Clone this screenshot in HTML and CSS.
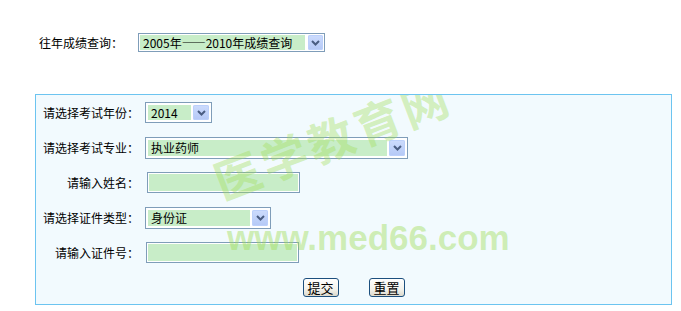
FILE: index.html
```html
<!DOCTYPE html>
<html lang="zh-CN">
<head>
    <meta charset="UTF-8">
    <title>成绩查询</title>
    <link rel="stylesheet" href="styles.css">
</head>
<body>
    <div class="history">
        <span class="history-label">往年成绩查询：</span>
        <span class="select select-history">
            <select>
                <option>2005年——2010年成绩查询</option>
            </select>
            <span class="arrow"><svg width="9" height="6" viewBox="0 0 9 6"><polyline points="1,1 4.5,4.5 8,1" fill="none" stroke="#4a5d82" stroke-width="2"/></svg></span>
        </span>
    </div>

    <form class="query">
        <label class="field-label">请选择考试年份：</label>
        <span class="select select-year">
            <select>
                <option>2014</option>
            </select>
            <span class="arrow"><svg width="9" height="6" viewBox="0 0 9 6"><polyline points="1,1 4.5,4.5 8,1" fill="none" stroke="#4a5d82" stroke-width="2"/></svg></span>
        </span>

        <label class="field-label">请选择考试专业：</label>
        <span class="select select-major">
            <select>
                <option>执业药师</option>
            </select>
            <span class="arrow"><svg width="9" height="6" viewBox="0 0 9 6"><polyline points="1,1 4.5,4.5 8,1" fill="none" stroke="#4a5d82" stroke-width="2"/></svg></span>
        </span>

        <label class="field-label">请输入姓名：</label>
        <input class="text-input input-name" type="text">

        <label class="field-label">请选择证件类型：</label>
        <span class="select select-idtype">
            <select>
                <option>身份证</option>
            </select>
            <span class="arrow"><svg width="9" height="6" viewBox="0 0 9 6"><polyline points="1,1 4.5,4.5 8,1" fill="none" stroke="#4a5d82" stroke-width="2"/></svg></span>
        </span>

        <label class="field-label">请输入证件号：</label>
        <input class="text-input input-id" type="text">

        <div class="actions">
            <button type="button" class="btn">提交</button>
            <button type="reset" class="btn">重置</button>
        </div>

        <!-- site watermark, laid over the form -->
        <div class="watermark">
            <span class="wm-cn">医学教育网</span>
            <span class="wm-url">www.med66.com</span>
        </div>
    </form>
</body>
</html>
```

FILE: styles.css
```css
body {
    margin: 0;
    background: #fff;
    font-family: "Noto Sans CJK SC", "DejaVu Sans", sans-serif;
    font-size: 12px;
    color: #000;
}

.history {
    display: flex;
    align-items: center;
    height: 19px;
    margin: 33px 0 0 39px;
}

.history-label {
    width: 99px;
    line-height: 19px;
}

/* IE/XP style dropdown */
.select {
    display: inline-flex;
    box-sizing: border-box;
    height: 21px;
    padding: 2px;
    gap: 2px;
    border: 1px solid #7f9db9;
    background: #fff;
}

.select select {
    flex: 1;
    min-width: 0;
    height: 100%;
    margin: 0;
    padding: 0 3px;
    border: 0;
    border-radius: 0;
    background: #c8edc8;
    font: inherit;
    line-height: 15px;
    color: #000;
    -webkit-appearance: none;
    appearance: none;
    outline: none;
}

.select .arrow {
    display: flex;
    align-items: center;
    justify-content: center;
    width: 16px;
    border-radius: 2px;
    background: linear-gradient(#cddcfd, #b4c8f6);
    box-shadow: inset 0 0 0 1px #bcd0fb;
}

.select-history {
    width: 187px;
    height: 19px;
    padding: 1px;
}

.select-history .arrow {
    width: 15px;
    margin-left: 1px;
}

.select-year {
    width: 67px;
}

.select-major {
    width: 263px;
    height: 22px;
}

.select-idtype {
    width: 126px;
    height: 22px;
}

.query {
    position: relative;
    display: grid;
    grid-template-columns: 103px 1fr;
    grid-auto-rows: 35px;
    column-gap: 6px;
    align-items: center;
    box-sizing: border-box;
    width: 637px;
    height: 211px;
    margin: 42px 0 0 35px;
    border: 1px solid #6cc4f0;
    background: #f2fafe;
}

.field-label {
    text-align: right;
    line-height: 16px;
}

.query .select,
.query .text-input {
    justify-self: start;
}

.text-input {
    box-sizing: border-box;
    width: 153px;
    height: 21px;
    margin: 0 0 0 1px;
    padding: 0 3px;
    border: 1px solid #7f9db9;
    background: #c8edc8;
    box-shadow: inset 0 0 0 1px #fff;
    font: inherit;
    outline: none;
}

.input-name {
    margin-left: 2px;
}

.actions {
    grid-column: 1 / -1;
    display: flex;
    justify-content: center;
    gap: 30px;
    height: 34px;
    align-items: center;
}

.btn {
    box-sizing: border-box;
    width: 36px;
    height: 19px;
    padding: 0;
    border: 1px solid #1c4f7e;
    border-radius: 3px;
    background: linear-gradient(#ffffff, #f3f2ec 60%, #dcd9cc);
    font: inherit;
    font-size: 13px;
    line-height: 16px;
    color: #000;
    cursor: pointer;
}

.watermark {
    position: absolute;
    inset: 0;
    pointer-events: none;
    overflow: hidden;
}

.wm-cn {
    position: absolute;
    left: 296px;
    top: 42px;
    transform: translate(-50%, -50%) rotate(-21deg);
    font-size: 46px;
    font-weight: bold;
    letter-spacing: 4px;
    line-height: 1;
    white-space: nowrap;
    color: rgba(160, 222, 90, 0.4);
}

.wm-url {
    position: absolute;
    left: 191px;
    top: 125px;
    font-family: "Liberation Sans", Arial, sans-serif;
    font-size: 35px;
    font-weight: bold;
    line-height: 1;
    white-space: nowrap;
    color: rgba(160, 222, 90, 0.45);
}
```
